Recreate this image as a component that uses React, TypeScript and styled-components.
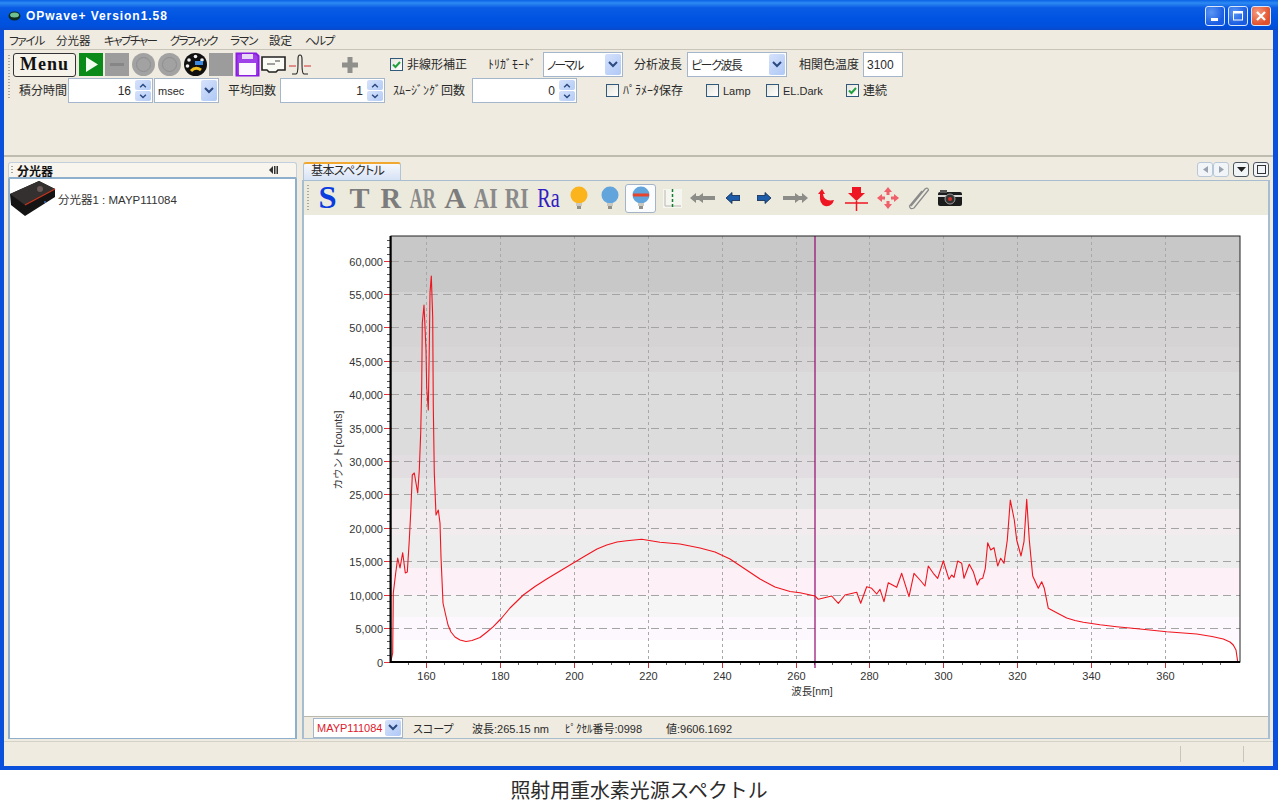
import React from 'react';
import styled, { createGlobalStyle } from 'styled-components';

const GlobalStyle = createGlobalStyle`
  html, body {
    margin: 0;
    padding: 0;
    background: #fff;
  }
  body {
    font-family: "Liberation Sans", "Noto Sans CJK JP", sans-serif;
    font-size: 12px;
    color: #2a2a2a;
  }
`;

const Page = styled.div`
  width: 1278px;
  height: 806px;
  overflow: hidden;
`;

const Win = styled.div`
  height: 770px;
  display: flex;
  flex-direction: column;
  background: #0a50dc;
  padding: 0 5px 4px 4px;
  box-sizing: border-box;
`;

const TitleBar = styled.div`
  height: 30px;
  margin: 0 -5px 0 -4px;
  padding: 2px 7px 0 8px;
  box-sizing: border-box;
  display: flex;
  align-items: center;
  background: linear-gradient(180deg, #0a63e6 0%, #2d8af2 10%, #0a5ce4 26%, #0054e2 60%, #0050dc 88%, #0a48c8 100%);
  flex: none;
`;

const TitleText = styled.span`
  margin-left: 5px;
  color: #fff;
  font-size: 12px;
  font-weight: bold;
  letter-spacing: 0.95px;
  flex: 1;
`;

const WinButton = styled.div<{ $close?: boolean }>`
  width: 20px;
  height: 20px;
  margin-left: 3px;
  box-sizing: border-box;
  border: 1px solid #d8e6fa;
  border-radius: 3px;
  display: flex;
  align-items: center;
  justify-content: center;
  background: ${p => (p.$close
    ? 'radial-gradient(circle at 30% 30%, #f49a80, #e2512c 70%)'
    : 'radial-gradient(circle at 30% 30%, #5a96f4, #1a5ce2 70%)')};
`;

const Client = styled.div`
  flex: 1;
  display: flex;
  flex-direction: column;
  min-height: 0;
  background: #efebe0;
`;

const MenuBar = styled.div`
  height: 20px;
  flex: none;
  display: flex;
  align-items: center;
  border-bottom: 1px solid #c8c5b8;
  box-sizing: border-box;
`;

const MenuItem = styled.span<{ $x: number; $w: number; $ls: number }>`
  margin-left: ${p => p.$x}px;
  width: ${p => p.$w}px;
  letter-spacing: ${p => p.$ls}px;
  white-space: nowrap;
  font-size: 11.5px;
  font-feature-settings: "palt";
`;

const ToolBar = styled.div`
  height: 107px;
  flex: none;
  box-sizing: border-box;
  border-bottom: 2px solid #bdbcae;
  display: flex;
  padding: 2px 0 0 4px;
`;

const Grip = styled.div<{ $h: number }>`
  width: 2px;
  height: ${p => p.$h}px;
  flex: none;
  background: repeating-linear-gradient(180deg, #a8a8a0 0 1px, transparent 1px 3px);
`;

const MainGrip = styled(Grip)`
  margin-top: 3px;
`;

const ToolColumn = styled.div`
  flex: 1;
  display: flex;
  flex-direction: column;
`;

const ToolRow = styled.div<{ $left: number }>`
  height: 25px;
  display: flex;
  align-items: center;
  padding-left: ${p => p.$left}px;
  margin-bottom: 1px;
`;

const MenuButton = styled.div`
  width: 63px;
  height: 24px;
  box-sizing: border-box;
  border: 1px solid #333;
  border-radius: 3px;
  background: #f5f3ea;
  font-family: "Liberation Serif", serif;
  font-weight: bold;
  font-size: 18px;
  letter-spacing: 1px;
  color: #111;
  text-align: center;
  line-height: 21px;
`;

const IconGroup = styled.div`
  display: flex;
  gap: 1px;
  margin-left: 3px;
`;

const IconSlot = styled.div`
  width: 25px;
  height: 25px;
  display: flex;
  align-items: center;
  justify-content: center;
`;

const PlusSlot = styled.div`
  margin-left: 30px;
  width: 16px;
  height: 25px;
  display: flex;
  align-items: center;
`;

const Label = styled.span<{ $ml: number; $w: number; $small?: boolean }>`
  margin-left: ${p => p.$ml}px;
  width: ${p => p.$w}px;
  flex: none;
  white-space: nowrap;
  font-size: ${p => (p.$small ? 11 : 12)}px;
  line-height: 16px;
`;

const CheckBox = styled.span<{ $ml: number }>`
  margin-left: ${p => p.$ml}px;
  width: 13px;
  height: 13px;
  flex: none;
  box-sizing: border-box;
  border: 1px solid #2f5a7c;
  background: linear-gradient(135deg, #e6e4dc, #fff);
  display: flex;
  align-items: center;
  justify-content: center;
`;

const Field = styled.div<{ $ml: number; $w: number; $h?: number }>`
  margin-left: ${p => p.$ml}px;
  width: ${p => p.$w}px;
  height: ${p => p.$h ?? 25}px;
  flex: none;
  box-sizing: border-box;
  border: 1px solid #a3b6cc;
  background: #fff;
  display: flex;
  align-items: center;
  padding-left: 3px;
  font-size: 12px;
`;

const FieldText = styled.span<{ $right?: boolean; $red?: boolean; $small?: boolean; $ls?: number }>`
  flex: 1;
  white-space: nowrap;
  overflow: hidden;
  font-size: ${p => (p.$small ? 11 : 12)}px;
  letter-spacing: ${p => p.$ls ?? 0}px;
  font-feature-settings: "palt";
  text-align: ${p => (p.$right ? 'right' : 'left')};
  padding-right: ${p => (p.$right ? '3px' : '0')};
  color: ${p => (p.$red ? '#e0202c' : 'inherit')};
`;

const DropButton = styled.div`
  width: 16px;
  align-self: stretch;
  margin: 1px;
  border-radius: 2px;
  background: linear-gradient(135deg, #d6e2fb, #aec8f6);
  display: flex;
  align-items: center;
  justify-content: center;
  flex: none;
`;

const SpinButtons = styled.div`
  width: 16px;
  align-self: stretch;
  margin: 1px;
  display: flex;
  flex-direction: column;
  gap: 1px;
  flex: none;
`;

const SpinPart = styled.div`
  flex: 1;
  border-radius: 2px;
  background: linear-gradient(135deg, #d6e2fb, #b4ccf6);
  display: flex;
  align-items: center;
  justify-content: center;
`;

const Workspace = styled.div`
  flex: 1;
  min-height: 0;
  display: flex;
  gap: 5px;
  padding: 5px 3px 2px 4px;
`;

const LeftPanel = styled.div`
  width: 289px;
  flex: none;
  display: flex;
  flex-direction: column;
`;

const PanelHead = styled.div`
  height: 17px;
  flex: none;
  box-sizing: border-box;
  padding: 0 18px 0 2px;
  border: 1px solid #c2cfdc;
  border-bottom: 2px solid #8fb0cc;
  border-radius: 3px 3px 0 0;
  background: #f7f5ee;
  display: flex;
  align-items: center;
  font-weight: bold;
  font-size: 12px;
  color: #111;
`;

const PanelTitle = styled.span`
  flex: 1;
  margin-left: 4px;
`;

const PanelBody = styled.div`
  flex: 1;
  background: #fff;
  border: 1px solid #8fb0cc;
  border-top: 0;
  border-left-width: 2px;
  border-right-width: 2px;
  display: flex;
  align-items: flex-start;
  padding: 2px 0 0 0;
`;

const DeviceName = styled.span`
  margin: 10px 0 0 2px;
  font-size: 11.5px;
  color: #333;
  white-space: pre;
`;

const RightPanel = styled.div`
  flex: 1;
  min-width: 0;
  display: flex;
  flex-direction: column;
`;

const TabRow = styled.div`
  height: 18px;
  flex: none;
  display: flex;
  align-items: flex-start;
  justify-content: flex-end;
  border-bottom: 1px solid #a8bdd0;
`;

const Tab = styled.div`
  margin-left: 1px;
  width: 98px;
  height: 18px;
  box-sizing: border-box;
  border: 1px solid #b0c4d6;
  border-top: 2px solid #f0a830;
  border-bottom: 0;
  border-radius: 3px 3px 0 0;
  background: linear-gradient(180deg, #f6f8fc, #d6e2f6);
  padding-left: 7px;
  font-size: 12px;
  line-height: 15px;
  letter-spacing: -0.6px;
  font-feature-settings: "palt";
  white-space: nowrap;
  margin-right: auto;
`;

const NavGroup = styled.div`
  display: flex;
  align-items: center;
  margin-right: 1px;
`;

const NavButton = styled.div<{ $dark?: boolean }>`
  width: 16px;
  height: 15px;
  margin-left: ${p => (p.$dark ? 4 : 0)}px;
  box-sizing: border-box;
  border: 1px solid ${p => (p.$dark ? '#4a5560' : '#b8c8d8')};
  border-radius: 3px;
  background: #f2f5f8;
  display: flex;
  align-items: center;
  justify-content: center;
`;

const RightBody = styled.div`
  flex: 1;
  min-height: 0;
  display: flex;
  flex-direction: column;
  border-left: 2px solid #a8bdd0;
  border-right: 2px solid #a8bdd0;
  border-bottom: 1px solid #a8bdd0;
  background: #fff;
`;

const SpectrumBar = styled.div`
  height: 34px;
  flex: none;
  background: #ece9dd;
  display: flex;
  align-items: center;
  padding-left: 3px;
`;

const BarGrip = styled(Grip)`
  margin-right: 9px;
`;

const ToolSlot = styled.div<{ $ml: number; $w: number; $active?: boolean }>`
  margin-left: ${p => p.$ml}px;
  width: ${p => p.$w}px;
  height: ${p => (p.$active ? 29 : 30)}px;
  flex: none;
  box-sizing: border-box;
  display: flex;
  align-items: center;
  justify-content: center;
  border: ${p => (p.$active ? '1px solid #a3b4c8' : '0')};
  border-radius: 3px;
  background: ${p => (p.$active ? '#fbfcfd' : 'transparent')};
`;

const LetterIcon = styled.span<{ $color: string; $sx: number; $size: number; $thin?: boolean }>`
  display: inline-block;
  font-family: "Liberation Serif", serif;
  font-weight: ${p => (p.$thin ? 'normal' : 'bold')};
  font-size: ${p => p.$size}px;
  line-height: 30px;
  color: ${p => p.$color};
  transform: scaleX(${p => p.$sx});
  white-space: nowrap;
`;

const ChartWrap = styled.div`
  flex: 1;
  min-height: 0;
  background: #fff;

  svg {
    display: block;
  }
`;

const InfoBar = styled.div`
  height: 21px;
  flex: none;
  background: #efebe0;
  border-top: 1px solid #b8b8ac;
  display: flex;
  align-items: center;
  font-size: 11px;
`;

const InfoText = styled.span<{ $ml: number; $w: number; $palt?: boolean }>`
  margin-left: ${p => p.$ml}px;
  width: ${p => p.$w}px;
  white-space: nowrap;
  font-feature-settings: ${p => (p.$palt ? '"palt"' : 'normal')};
`;

const StatusBar = styled.div`
  height: 25px;
  flex: none;
  border-top: 1px solid #d4d2c6;
  display: flex;
  justify-content: flex-end;
  padding: 4px 29px 4px 0;
  box-sizing: border-box;
`;

const StatusCell = styled.div`
  width: 62px;
  border-left: 1px solid #c8c6ba;
  border-right: 1px solid #c8c6ba;
`;

const Caption = styled.div`
  height: 36px;
  box-sizing: border-box;
  padding-top: 3px;
  display: flex;
  align-items: center;
  justify-content: center;
  font-size: 19.9px;
  color: #2c2c2c;
`;

const Chevron = ({ up, small }: { up?: boolean; small?: boolean }) => (
  <svg width={small ? 8 : 10} height={small ? 5 : 7} viewBox="0 0 10 7">
    <path d={up ? 'M1 6 L5 2 L9 6' : 'M1 1 L5 5 L9 1'} fill="none" stroke="#2a4a80" strokeWidth={2} />
  </svg>
);

const Tick = () => (
  <svg width={11} height={11} viewBox="0 0 11 11">
    <path d="M2 5.5 L4.5 8 L9 3" fill="none" stroke="#22a040" strokeWidth={2} />
  </svg>
);

const SelectBox = ({ ml, w, h, text, red, small, ls }: { ml: number; w: number; h?: number; text: string; red?: boolean; small?: boolean; ls?: number }) => (
  <Field $ml={ml} $w={w} $h={h}>
    <FieldText $red={red} $small={small} $ls={ls}>{text}</FieldText>
    <DropButton><Chevron /></DropButton>
  </Field>
);

const SpinBox = ({ ml, w, value }: { ml: number; w: number; value: string }) => (
  <Field $ml={ml} $w={w}>
    <FieldText $right>{value}</FieldText>
    <SpinButtons>
      <SpinPart><Chevron up small /></SpinPart>
      <SpinPart><Chevron small /></SpinPart>
    </SpinButtons>
  </Field>
);

const GrayBlock = () => (
  <svg width={25} height={25}><rect x={0} y={1} width={24} height={23} fill="#9c9c9c" /></svg>
);

const GrayCircle = () => (
  <svg width={25} height={25}>
    <circle cx={12.5} cy={12.5} r={11.5} fill="#a2a2a2" />
    <circle cx={12.5} cy={12.5} r={7} fill="none" stroke="#8e8e8e" />
  </svg>
);

const Bulb = ({ fill, bar }: { fill: string; bar?: boolean }) => (
  <svg width={20} height={26} viewBox="0 0 20 26">
    <circle cx={10} cy={10} r={8.5} fill={fill} />
    <rect x={7} y={18} width={6} height={3} fill="#c8c8c0" />
    <rect x={8} y={21} width={4} height={3} fill="#909088" />
    {bar && <rect x={2} y={8.5} width={16} height={3} fill="#e8442c" />}
  </svg>
);

const GrayArrows = ({ flip }: { flip?: boolean }) => (
  <svg width={25} height={12} viewBox="0 0 25 12" style={flip ? { transform: 'scaleX(-1)' } : undefined}>
    <path d="M0 6 L6 1 V4 H9 L13 1 V4 H25 V8 H13 V11 L9 8 H6 V11 Z" fill="#8c8c88" />
  </svg>
);

const BlueArrow = ({ flip }: { flip?: boolean }) => (
  <svg width={14} height={12} viewBox="0 0 14 12" style={flip ? { transform: 'scaleX(-1)' } : undefined}>
    <path d="M0 6 L6 0.5 V3.5 H14 V8.5 H6 V11.5 Z" fill="#1c5ca8" stroke="#10284c" strokeWidth={0.8} />
  </svg>
);

const DeviceIcon = () => (
  <svg width={47} height={36} viewBox="0 0 47 36" style={{ flex: 'none', marginLeft: -1 }}>
    <path d="M1 13 L30 0 L46 8 L46 16 L16 35 L2 24 Z" fill="#141414" />
    <path d="M1 13 L30 0 L46 8 L16 24 Z" fill="#33302f" />
    <path d="M16 24 L46 8" stroke="#c8341c" strokeWidth={1.4} />
    <circle cx={31} cy={8} r={3} fill="#6a5a58" />
    <circle cx={36} cy={21} r={1} fill="#3a70c8" />
  </svg>
);

// 帯グラデーション (上から)
const bands: [number, number, string][] = [
  [236, 292, '#c8c8c8'],
  [292, 320, '#d2d2d2'],
  [320, 347, '#d6d3d4'],
  [347, 372, '#d9d6d8'],
  [372, 455, '#dcdcdc'],
  [455, 478, '#e1dde1'],
  [478, 509, '#e6e6e6'],
  [509, 535, '#f2ecef'],
  [535, 568, '#ededed'],
  [568, 595, '#fdf0f6'],
  [595, 617, '#f6f6f6'],
  [617, 640, '#fdf8fd'],
];

const spectrum: [number, number][] = [
  [390.7, 662], [392.7, 653], [393.3, 593], [395.7, 573], [397.7, 558], [400, 568], [402.7, 552.7],
  [405.3, 573], [407.3, 572], [409.3, 540], [410.7, 513], [412.3, 475], [414.3, 473], [417.7, 493],
  [419.3, 470], [420.7, 433], [421.7, 387], [422.3, 323], [424, 305], [425, 327], [426, 350], [426.7, 387],
  [428.3, 410], [429.3, 347], [430, 293], [431.3, 276], [432.7, 317], [433.3, 407], [434.3, 473], [436, 515],
  [438.3, 510], [440, 523], [441, 557], [443, 603], [445, 612], [448, 625], [451, 632], [455, 637], [460, 640],
  [466, 641.5], [472, 640.5], [480, 637.5], [487, 632], [493.3, 626.7], [501.7, 618], [510, 608], [523.3, 595],
  [535, 586.5], [546.7, 579], [560, 571], [573.3, 563], [585, 556], [597, 549], [606.7, 545], [617, 542],
  [626.7, 540.7], [641.7, 539.3], [660, 542.3], [680, 544], [700, 548], [715, 552], [730, 559], [745, 569],
  [760, 579], [775, 587], [790, 591.5], [800, 592.7],
  [815, 596], [818.3, 599.3], [831.7, 596], [838.3, 603.3], [845, 595], [856.7, 592.3], [860.7, 603.3], [866.7, 586.7],
  [871.7, 588.3], [876.7, 594], [880, 589.3], [884, 601.7], [888.3, 582.7], [896.7, 587.3], [901.7, 573.3], [909, 596.7],
  [914, 573.3], [920, 580], [925, 586], [928.3, 566], [933.3, 573.3], [937.7, 578.3], [943.3, 561], [949, 579.3],
  [951.7, 575], [954, 577.3], [957.7, 561], [961.7, 563.3], [964, 578.3], [969.3, 564.3], [973.3, 571.7], [977.3, 585],
  [980, 579.3], [982.7, 578.3], [985.3, 568.3], [987.7, 542.7], [990.7, 550], [994, 547.7], [997.7, 566], [1000.7, 558.3],
  [1004, 563.3], [1007.3, 540], [1010.3, 500], [1014.3, 520], [1016.7, 540], [1021, 556], [1024, 541.7], [1026.7, 499.3],
  [1029.3, 540], [1032.7, 576], [1038.3, 588.3], [1041.7, 581.7], [1044.3, 588.3], [1048.3, 608.3], [1056.7, 612.7],
  [1066.7, 618], [1075, 620.5], [1083.3, 622.3], [1100, 624.7], [1116.7, 626.7], [1140, 629], [1166.7, 631.7], [1196.7, 634],
  [1212, 636.5], [1223.3, 639], [1230, 642], [1233.3, 645], [1236, 650], [1237.7, 661.7],
];

const xOf = (nm: number) => Math.round(426 + (nm - 160) * 3.695) + 0.5;
const yOf = (c: number) => Math.round(661.5 - c * 0.006683) + 0.5;
const counts = [0, 5000, 10000, 15000, 20000, 25000, 30000, 35000, 40000, 45000, 50000, 55000, 60000];
const waves = [160, 180, 200, 220, 240, 260, 280, 300, 320, 340, 360];

const Chart = () => {
  const minorY: number[] = [];
  for (let c = 1000; c < 64000; c += 1000) if (c % 5000) minorY.push(c);
  const minorX: number[] = [];
  for (let n = 155; n < 380; n += 5) if (n % 20) minorX.push(n);

  return (
    <svg width={966} height={502} viewBox="304 215 966 502">
      {bands.map(([a, b, c]) => <rect key={a} x={391} y={a} width={849} height={b - a} fill={c} />)}
      {counts.slice(1).map(c => (
        <line key={c} x1={391} x2={1240} y1={yOf(c)} y2={yOf(c)} stroke="#a4a4a4" strokeDasharray="8 5" />
      ))}
      {waves.map(n => (
        <line key={n} x1={xOf(n)} x2={xOf(n)} y1={236} y2={662} stroke="#a8a8a8" strokeDasharray="3 3" />
      ))}
      {minorY.map(c => <line key={c} x1={387} x2={391} y1={yOf(c)} y2={yOf(c)} stroke="#555" />)}
      {minorX.map(n => <line key={n} x1={xOf(n)} x2={xOf(n)} y1={662} y2={665} stroke="#666" />)}
      {counts.map(c => <line key={c} x1={384} x2={392} y1={yOf(c)} y2={yOf(c)} stroke="#e03038" />)}
      {waves.map(n => <line key={n} x1={xOf(n)} x2={xOf(n)} y1={662} y2={668} stroke="#c03038" />)}
      <line x1={815} x2={815} y1={236} y2={668} stroke="#900a6c" strokeWidth={1.2} />
      <polyline
        points={spectrum.map(p => p.join(',')).join(' ')}
        fill="none"
        stroke="#f0141e"
        strokeWidth={1.1}
        strokeLinejoin="round"
      />
      <rect x={391} y={236} width={849} height={426} fill="none" stroke="#222" />
      <line x1={390.5} x2={390.5} y1={236} y2={663} stroke="#000" strokeWidth={2} />
      <line x1={390} x2={1240} y1={662} y2={662} stroke="#000" strokeWidth={2} />
      <g fontFamily="Liberation Sans, sans-serif" fontSize={11} fill="#333">
        {counts.map(c => (
          <text key={c} x={383} y={yOf(c) + 4} textAnchor="end">{c.toLocaleString('en-US')}</text>
        ))}
        {waves.map(n => <text key={n} x={xOf(n)} y={680} textAnchor="middle">{n}</text>)}
      </g>
      <g fontFamily="Liberation Sans, Noto Sans CJK JP, sans-serif" fontSize={10.5} fill="#333">
        <text x={812} y={695} textAnchor="middle">波長[nm]</text>
        <text x={342} y={450} textAnchor="middle" transform="rotate(-90 342 450)">カウント[counts]</text>
      </g>
    </svg>
  );
};

const letters: { t: string; ml: number; w: number; c: string; sx: number; s: number; thin?: boolean }[] = [
  { t: 'S', ml: 0, w: 20, c: '#0a3ce0', sx: 1.05, s: 31 },
  { t: 'T', ml: 11, w: 21, c: '#7c7c7c', sx: 1, s: 30 },
  { t: 'R', ml: 11, w: 20, c: '#7c7c7c', sx: 0.95, s: 30 },
  { t: 'AR', ml: 9, w: 26, c: '#8a8a8a', sx: 0.6, s: 30 },
  { t: 'A', ml: 8, w: 22, c: '#7c7c7c', sx: 1, s: 30 },
  { t: 'AI', ml: 8, w: 24, c: '#8a8a8a', sx: 0.72, s: 30 },
  { t: 'RI', ml: 7, w: 24, c: '#8a8a8a', sx: 0.72, s: 30 },
  { t: 'Ra', ml: 8, w: 23, c: '#3020c0', sx: 0.72, s: 28, thin: true },
];

export default function App() {
  return (
    <Page>
      <GlobalStyle />
      <Win>
        <TitleBar>
          <svg width={13} height={10} viewBox="0 0 13 10">
            <ellipse cx={6.5} cy={5} rx={6} ry={4.5} fill="#0c2c20" />
            <ellipse cx={6.5} cy={4} rx={4.5} ry={2.5} fill="#70c090" />
          </svg>
          <TitleText>OPwave+ Version1.58</TitleText>
          <WinButton>
            <svg width={12} height={12}><rect x={2} y={8} width={7} height={3} fill="#fff" /></svg>
          </WinButton>
          <WinButton>
            <svg width={12} height={12}>
              <rect x={1.5} y={2} width={9} height={8} fill="none" stroke="#fff" />
              <rect x={1} y={1} width={10} height={2.5} fill="#fff" />
            </svg>
          </WinButton>
          <WinButton $close>
            <svg width={12} height={12}>
              <path d="M2 2 L10 10 M10 2 L2 10" stroke="#fff" strokeWidth={2.2} />
            </svg>
          </WinButton>
        </TitleBar>
        <Client>
          <MenuBar>
            <MenuItem $x={5} $w={34} $ls={-1.2}>ファイル</MenuItem>
            <MenuItem $x={13} $w={35} $ls={0}>分光器</MenuItem>
            <MenuItem $x={13} $w={54} $ls={-1.6}>キャプチャー</MenuItem>
            <MenuItem $x={12} $w={48} $ls={-1.9}>グラフィック</MenuItem>
            <MenuItem $x={12} $w={27} $ls={-1}>ラマン</MenuItem>
            <MenuItem $x={12} $w={25} $ls={0}>設定</MenuItem>
            <MenuItem $x={11} $w={30} $ls={-1.4}>ヘルプ</MenuItem>
          </MenuBar>
          <ToolBar>
            <MainGrip $h={45} />
            <ToolColumn>
              <ToolRow $left={3}>
                <MenuButton>Menu</MenuButton>
                <IconGroup>
                  <IconSlot>
                    <svg width={25} height={25}>
                      <rect x={0} y={1} width={24} height={23} fill="#0a8a18" />
                      <path d="M7 5 L19 12.5 L7 20 Z" fill="#f2fff0" />
                    </svg>
                  </IconSlot>
                  <IconSlot>
                    <svg width={25} height={25}>
                      <rect x={0} y={1} width={24} height={23} fill="#9c9c9c" />
                      <rect x={5} y={11} width={14} height={3} fill="#868686" />
                    </svg>
                  </IconSlot>
                  <IconSlot><GrayCircle /></IconSlot>
                  <IconSlot><GrayCircle /></IconSlot>
                  <IconSlot>
                    <svg width={25} height={25}>
                      <circle cx={12.5} cy={12.5} r={11.5} fill="#101010" />
                      <circle cx={12.5} cy={4.5} r={1.8} fill="#f0f0f0" />
                      <circle cx={6} cy={8} r={1.8} fill="#f0f0f0" />
                      <circle cx={19} cy={8} r={1.8} fill="#f0f0f0" />
                      <circle cx={4.5} cy={14} r={1.8} fill="#f0f0f0" />
                      <rect x={12} y={9} width={8} height={4} fill="#3a8ae0" />
                      <path d="M8 19 Q12.5 14 18 18" stroke="#f0c020" strokeWidth={3} fill="none" />
                    </svg>
                  </IconSlot>
                  <IconSlot><GrayBlock /></IconSlot>
                  <IconSlot>
                    <svg width={25} height={25}>
                      <path d="M1.5 1.5 H21 L23.5 4 V23.5 H1.5 Z" fill="#a040e8" stroke="#8a1ce0" strokeWidth={2} />
                      <rect x={7} y={2} width={11} height={5} fill="#e8d8f8" />
                      <rect x={4} y={11} width={17} height={12} fill="#fdf8ff" />
                    </svg>
                  </IconSlot>
                  <IconSlot>
                    <svg width={25} height={20} viewBox="0 0 25 20">
                      <path d="M1 2 H24 V15 H17 L15 17 H8 L6 15 H1 Z" fill="#fbfbf6" stroke="#222" strokeWidth={1.6} />
                      <path d="M6 9 H14 M14 6 H19" stroke="#444" />
                    </svg>
                  </IconSlot>
                  <IconSlot>
                    <svg width={24} height={22} viewBox="0 0 24 22">
                      <path d="M1 12 H8 M16 12 H23" stroke="#d03030" />
                      <path d="M4 20 H8 Q10 20 10 10 V5 Q10 1 12 1 Q14 1 14 5 V10 Q14 20 16 20 H20" fill="none" stroke="#222" strokeWidth={1.1} />
                    </svg>
                  </IconSlot>
                </IconGroup>
                <PlusSlot>
                  <svg width={16} height={16}>
                    <path d="M5.5 0 H10.5 V5.5 H16 V10.5 H10.5 V16 H5.5 V10.5 H0 V5.5 H5.5 Z" fill="#8f8f8c" />
                  </svg>
                </PlusSlot>
                <CheckBox $ml={32}><Tick /></CheckBox>
                <Label $ml={4} $w={60}>非線形補正</Label>
                <Label $ml={21} $w={51}>ﾄﾘｶﾞﾓｰﾄﾞ</Label>
                <SelectBox ml={4} w={80} text="ノーマル" ls={-2} />
                <Label $ml={11} $w={49}>分析波長</Label>
                <SelectBox ml={4} w={100} text="ピーク波長" ls={-1.5} />
                <Label $ml={12} $w={60}>相関色温度</Label>
                <Field $ml={4} $w={40}><FieldText>3100</FieldText></Field>
              </ToolRow>
              <ToolRow $left={9}>
                <Label $ml={0} $w={48}>積分時間</Label>
                <SpinBox ml={1} w={85} value="16" />
                <SelectBox ml={1} w={65} text="msec" small />
                <Label $ml={9} $w={48}>平均回数</Label>
                <SpinBox ml={4} w={105} value="1" />
                <Label $ml={8} $w={74}>ｽﾑｰｼﾞﾝｸﾞ回数</Label>
                <SpinBox ml={5} w={105} value="0" />
                <CheckBox $ml={29} />
                <Label $ml={4} $w={63}>ﾊﾟﾗﾒｰﾀ保存</Label>
                <CheckBox $ml={20} />
                <Label $ml={4} $w={26} $small>Lamp</Label>
                <CheckBox $ml={17} />
                <Label $ml={4} $w={38} $small>EL.Dark</Label>
                <CheckBox $ml={25}><Tick /></CheckBox>
                <Label $ml={4} $w={24}>連続</Label>
              </ToolRow>
            </ToolColumn>
          </ToolBar>
          <Workspace>
            <LeftPanel>
              <PanelHead>
                <Grip $h={9} />
                <PanelTitle>分光器</PanelTitle>
                <svg width={9} height={8} viewBox="0 0 9 8">
                  <path d="M0 4 L4 0 V8 Z" fill="#333" />
                  <rect x={5} y={0} width={1.5} height={8} fill="#333" />
                  <rect x={7.5} y={0} width={1.5} height={8} fill="#333" />
                </svg>
              </PanelHead>
              <PanelBody>
                <DeviceIcon />
                <DeviceName>分光器1 : MAYP111084</DeviceName>
              </PanelBody>
            </LeftPanel>
            <RightPanel>
              <TabRow>
                <Tab>基本スペクトル</Tab>
                <NavGroup>
                  <NavButton>
                    <svg width={5} height={7}><path d="M5 0 L0 3.5 L5 7 Z" fill="#9aa4ae" /></svg>
                  </NavButton>
                  <NavButton>
                    <svg width={5} height={7}><path d="M0 0 L5 3.5 L0 7 Z" fill="#9aa4ae" /></svg>
                  </NavButton>
                  <NavButton $dark>
                    <svg width={9} height={5}><path d="M0 0 H9 L4.5 5 Z" fill="#222" /></svg>
                  </NavButton>
                  <NavButton $dark>
                    <svg width={9} height={9}><rect x={0.5} y={0.5} width={8} height={8} fill="none" stroke="#333" /></svg>
                  </NavButton>
                </NavGroup>
              </TabRow>
              <RightBody>
                <SpectrumBar>
                  <BarGrip $h={27} />
                  {letters.map(l => (
                    <ToolSlot key={l.t} $ml={l.ml} $w={l.w}>
                      <LetterIcon $color={l.c} $sx={l.sx} $size={l.s} $thin={l.thin}>{l.t}</LetterIcon>
                    </ToolSlot>
                  ))}
                  <ToolSlot $ml={9} $w={20}><Bulb fill="#fbb41c" /></ToolSlot>
                  <ToolSlot $ml={11} $w={20}><Bulb fill="#62a4dc" /></ToolSlot>
                  <ToolSlot $ml={5} $w={31} $active><Bulb fill="#62a4dc" bar /></ToolSlot>
                  <ToolSlot $ml={7} $w={19}>
                    <svg width={19} height={21}>
                      <rect x={0} y={1} width={19} height={19} fill="#f6f6f0" />
                      <path d="M2 2 V18 H18" stroke="#b8b8b0" fill="none" />
                      <path d="M9.5 1 V19" stroke="#108030" strokeWidth={1.5} strokeDasharray="3 2" />
                    </svg>
                  </ToolSlot>
                  <ToolSlot $ml={8} $w={25}><GrayArrows /></ToolSlot>
                  <ToolSlot $ml={11} $w={14}><BlueArrow /></ToolSlot>
                  <ToolSlot $ml={17} $w={14}><BlueArrow flip /></ToolSlot>
                  <ToolSlot $ml={12} $w={25}><GrayArrows flip /></ToolSlot>
                  <ToolSlot $ml={8} $w={20}>
                    <svg width={20} height={20} viewBox="0 0 20 20">
                      <path d="M2 6 L6 1 L9 6 H7 Q8 14 18 12 Q16 19 9 18 Q3 16 4 6 Z" fill="#ee1622" />
                    </svg>
                  </ToolSlot>
                  <ToolSlot $ml={8} $w={25}>
                    <svg width={25} height={25} viewBox="0 0 25 25">
                      <path d="M8 1 H17 V7 H21 L12.5 15 L4 7 H8 Z" fill="#ee1622" />
                      <path d="M1 17 H24 M12.5 15 V25" stroke="#ee1622" strokeWidth={1.5} />
                    </svg>
                  </ToolSlot>
                  <ToolSlot $ml={7} $w={24}>
                    <svg width={24} height={24} viewBox="0 0 24 24" fill="#f0606a">
                      <path d="M12 1 L16 6 H13.5 V9 H10.5 V6 H8 Z" />
                      <path d="M12 23 L16 18 H13.5 V15 H10.5 V18 H8 Z" />
                      <path d="M1 12 L6 8 V10.5 H9 V13.5 H6 V16 Z" />
                      <path d="M23 12 L18 8 V10.5 H15 V13.5 H18 V16 Z" />
                    </svg>
                  </ToolSlot>
                  <ToolSlot $ml={7} $w={23}>
                    <svg width={23} height={24} viewBox="0 0 23 24">
                      <path d="M4 20 L18 3 Q21 1 21.5 4 L7 22 Q3 24 2.5 20 L15 5" fill="none" stroke="#8a8a8a" strokeWidth={1.3} />
                    </svg>
                  </ToolSlot>
                  <ToolSlot $ml={8} $w={24}>
                    <svg width={24} height={18} viewBox="0 0 24 18">
                      <rect x={0} y={3} width={24} height={14} rx={2} fill="#1c1c1c" />
                      <rect x={2} y={1} width={7} height={3} fill="#555" />
                      <rect x={0} y={6} width={24} height={2} fill="#d8d8d8" />
                      <circle cx={12} cy={10} r={5} fill="#333" stroke="#999" />
                      <circle cx={12} cy={10} r={2} fill="#d03028" />
                    </svg>
                  </ToolSlot>
                </SpectrumBar>
                <ChartWrap><Chart /></ChartWrap>
                <InfoBar>
                  <SelectBox ml={9} w={90} h={20} text="MAYP111084" red small />
                  <InfoText $ml={10} $w={37} $palt>スコープ</InfoText>
                  <InfoText $ml={22} $w={77}>波長:265.15 nm</InfoText>
                  <InfoText $ml={16} $w={82}>ﾋﾟｸｾﾙ番号:0998</InfoText>
                  <InfoText $ml={19} $w={66}>値:9606.1692</InfoText>
                </InfoBar>
              </RightBody>
            </RightPanel>
          </Workspace>
          <StatusBar>
            <StatusCell />
          </StatusBar>
        </Client>
      </Win>
      <Caption>照射用重水素光源スペクトル</Caption>
    </Page>
  );
}
